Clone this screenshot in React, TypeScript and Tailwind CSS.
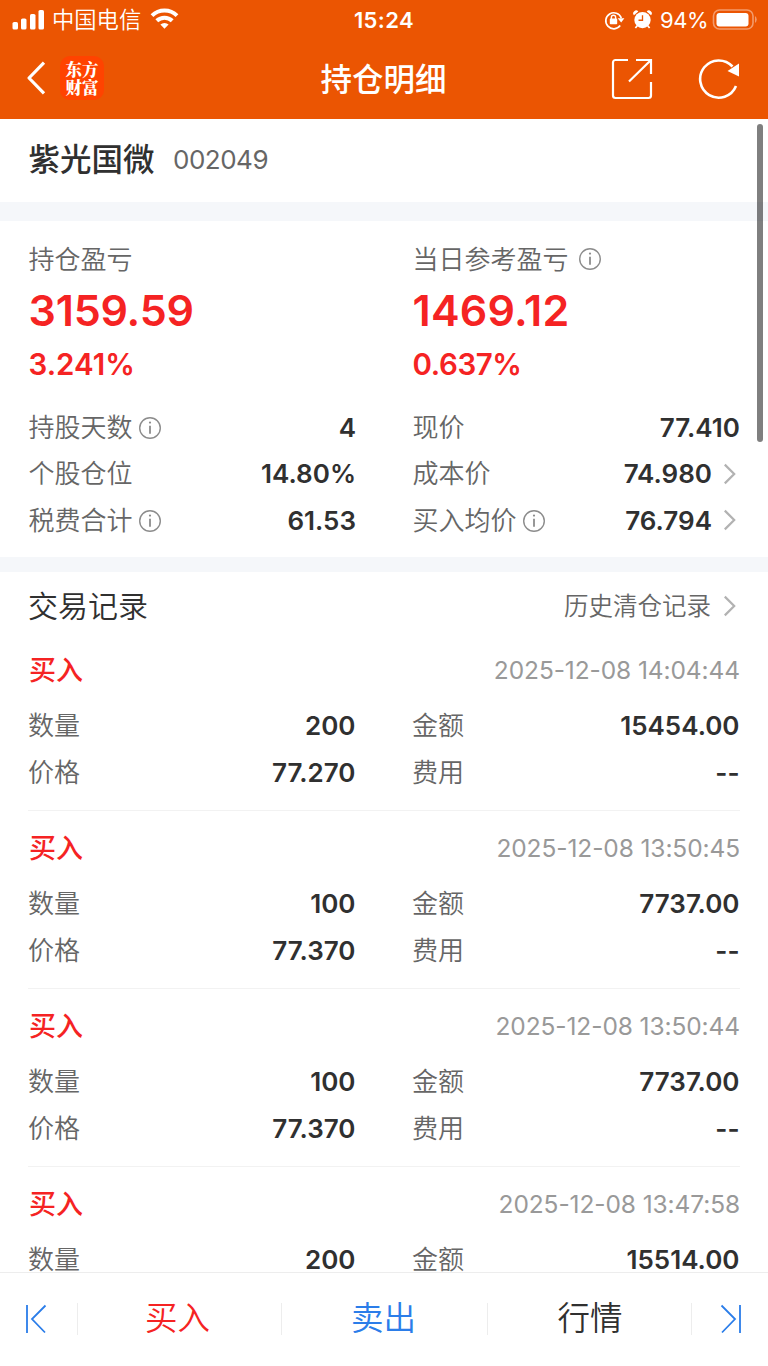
import clsx from "clsx";

const records = [
  { time: "2025-12-08 14:04:44", count: "200", price: "77.270", amount: "15454.00", fee: "--" },
  { time: "2025-12-08 13:50:45", count: "100", price: "77.370", amount: "7737.00", fee: "--" },
  { time: "2025-12-08 13:50:44", count: "100", price: "77.370", amount: "7737.00", fee: "--" },
  { time: "2025-12-08 13:47:58", count: "200", price: "77.370", amount: "15514.00", fee: "--" },
];

function InfoIcon() {
  return (
    <svg width="24" height="24" viewBox="0 0 24 24" fill="none" stroke="#8c8c8c" strokeWidth="1.4">
      <circle cx="12" cy="12" r="10.3" />
      <path d="M12 9.8v8" strokeWidth="1.8" />
      <circle cx="12" cy="6.6" r="1.1" fill="#8c8c8c" stroke="none" />
    </svg>
  );
}

function Arrow() {
  return (
    <svg width="14" height="22" viewBox="0 0 14 22" fill="none" stroke="#b2b2b2" strokeWidth="2.2">
      <path d="M1.8 1.6 11.2 11l-9.4 9.4" />
    </svg>
  );
}

type FieldProps = { label: string; value: string; info?: boolean; arrow?: boolean };

function Field({ label, value, info, arrow }: FieldProps) {
  return (
    <div className="flex h-[46.5px] items-center">
      <span className="text-[26px] font-[350] text-[#666]">{label}</span>
      {info && (
        <span className="ml-[5.5px] mt-0.5">
          <InfoIcon />
        </span>
      )}
      <span className="-mr-[0.5px] ml-auto text-[26px] font-semibold text-[#303030]">{value}</span>
      {arrow && (
        <span className="ml-[11px] mr-[3px]">
          <Arrow />
        </span>
      )}
    </div>
  );
}

function StatusBar() {
  return (
    <div className="flex h-10 items-center pl-3 pr-2.5">
      <div className="flex flex-1 items-center">
        <svg width="33" height="20" viewBox="0 0 33 20" fill="#fff">
          <rect x="0.5" y="12" width="5.5" height="7.5" rx="1.6" />
          <rect x="9" y="8.5" width="5.5" height="11" rx="1.6" />
          <rect x="18" y="4" width="5.5" height="15.5" rx="1.6" />
          <rect x="26.5" y="0" width="5.5" height="19.5" rx="1.6" />
        </svg>
        <span className="ml-[7px] pb-px text-[22.3px] font-[350] leading-[38px]">中国电信</span>
        <svg className="mb-[3px] ml-[9px]" width="29" height="21" viewBox="0 0 29 21" fill="none" stroke="#fff" strokeWidth="4">
          <path d="M2 7.6a18 18 0 0 1 25 0" />
          <path d="M6.8 12.8a11 11 0 0 1 15.4 0" />
          <path d="M14.5 20.8 10.4 16.6a6 6 0 0 1 8.2 0z" fill="#fff" stroke="none" />
        </svg>
      </div>
      <span className="mr-0.5 text-[22px] font-semibold tracking-[0.4px]">15:24</span>
      <div className="flex flex-1 items-center justify-end">
        <svg width="21" height="20" viewBox="0 0 21 20" fill="none" stroke="#fff" strokeWidth="1.7">
          <path d="M16.2 15.6A8 8 0 1 1 17.3 8" />
          <path d="m13.6 8.2h6.8l-3.2 4.4z" fill="#fff" stroke="none" />
          <rect x="5.8" y="8.6" width="7.4" height="5.6" rx="0.8" fill="#fff" stroke="none" />
          <path d="M7.4 9V7.3a2.1 2.1 0 0 1 4.2 0V9" strokeWidth="1.4" />
        </svg>
        <svg className="mb-0.5 ml-2" width="19" height="19" viewBox="0 0 20 20" fill="#fff">
          <circle cx="10" cy="10.6" r="8.6" />
          <path d="M1 5.6a3 3 0 0 1 4.6-4zM19 5.6a3 3 0 0 0-4.6-4z" />
          <path d="m4.5 16.5-2 2.5M15.5 16.5l2 2.5" stroke="#fff" strokeWidth="1.8" />
          <path d="M10 5.6v5.2H5.8" fill="none" stroke="#eb5502" strokeWidth="1.4" />
        </svg>
        <span className="ml-2 text-[22px] tracking-[-0.5px]">94%</span>
        <svg className="mb-px ml-1" width="46" height="22" viewBox="0 0 46 22">
          <rect x="1.5" y="1" width="39.5" height="19" rx="6" fill="none" stroke="#f39b6c" strokeWidth="1.6" />
          <rect x="4.5" y="4" width="32" height="13.5" rx="3" fill="#fff" />
          <path d="M43 7a4.4 4.4 0 0 1 0 7z" fill="#f39b6c" />
        </svg>
      </div>
    </div>
  );
}

function NavBar() {
  return (
    <div className="flex h-[79px] items-center pb-0.5 pl-[26px] pr-[27px]">
      <div className="flex flex-1 items-center pb-0.5">
        <svg width="21" height="34" viewBox="0 0 21 34" fill="none" stroke="#fff" strokeWidth="3.2" strokeLinejoin="round">
          <path d="M18 1.6 3 17l15 15.4" />
        </svg>
        <div className="ml-[13px] flex h-11 w-11 items-center justify-center rounded-[10px] bg-[#ff4300] text-center font-['Noto_Serif_CJK_SC','Noto_Sans_CJK_SC',serif] text-[16.5px] font-black leading-[18px]">
          东方
          <br />
          财富
        </div>
      </div>
      <h1 className="pt-0.5 text-[31.5px] font-medium leading-none">持仓明细</h1>
      <div className="flex flex-1 items-center justify-end">
        <svg width="42" height="42" viewBox="0 0 42 42" fill="none" stroke="#fff" strokeWidth="2.2">
          <path d="M17 2H4.5A2.5 2.5 0 0 0 2 4.5v33A2.5 2.5 0 0 0 4.5 40h33a2.5 2.5 0 0 0 2.5-2.5V24" />
          <path d="M25 2h15v14M39.5 2.5 18 23.5" />
        </svg>
        <svg className="ml-[45px]" width="43" height="42" viewBox="0 0 43 42" fill="none" stroke="#fff" strokeWidth="2.6">
          <path d="M38 28A18.6 18.6 0 1 1 34.5 8.5" />
          <path d="M29.5 13 41 5.5v13z" fill="#fff" stroke="none" />
        </svg>
      </div>
    </div>
  );
}

function Summary() {
  return (
    <section className="grid h-[336px] grid-cols-[327px_327px] content-start gap-x-[57px] pl-[28.5px] pt-[18px]">
      <div>
        <div className="flex h-10 items-center text-[26px] font-[350] text-[#666]">持仓盈亏</div>
        <div className="text-[43px] font-semibold leading-[62px] tracking-[-0.2px] text-[#f52323]">3159.59</div>
        <div className="text-[29.5px] font-semibold leading-[46px] text-[#f52323]">3.241%</div>
      </div>
      <div>
        <div className="flex h-10 items-center text-[26px] font-[350] text-[#666]">
          当日参考盈亏
          <span className="ml-[9px]">
            <InfoIcon />
          </span>
        </div>
        <div className="text-[43px] font-semibold leading-[62px] tracking-[0.2px] text-[#f52323]">1469.12</div>
        <div className="text-[29.5px] font-semibold leading-[46px] tracking-[-0.4px] text-[#f52323]">0.637%</div>
      </div>
      <div className="pt-[17px]">
        <Field label="持股天数" value="4" info />
        <Field label="个股仓位" value="14.80%" />
        <Field label="税费合计" value="61.53" info />
      </div>
      <div className="pt-[17px]">
        <Field label="现价" value="77.410" />
        <Field label="成本价" value="74.980" arrow />
        <Field label="买入均价" value="76.794" info arrow />
      </div>
    </section>
  );
}

function RecordItem({ record }: { record: (typeof records)[number] }) {
  return (
    <div className="h-[178px] border-b border-[#f2f2f2] pt-[14px]">
      <div className="flex h-12 items-center justify-between">
        <span className="pl-px text-[27px] font-medium text-[#f52323]">买入</span>
        <span className="pb-0.5 text-[24.5px] tracking-[-0.1px] text-[#999]">{record.time}</span>
      </div>
      <div className="grid grid-cols-[327px_327px] gap-x-[57px] pt-[7.5px]">
        <Field label="数量" value={record.count} />
        <Field label="金额" value={record.amount} />
        <Field label="价格" value={record.price} />
        <Field label="费用" value={record.fee} />
      </div>
    </div>
  );
}

const tabs = [
  { label: "买入", color: "text-[#f52323]" },
  { label: "卖出", color: "text-[#2b7de9]" },
  { label: "行情", color: "text-[#303030]" },
];

function BottomBar() {
  return (
    <footer className="flex h-[94px] shrink-0 items-center border-t border-[#ededed] bg-white pb-0.5">
      <div className="flex w-[77px] items-center pl-[25px]">
        <svg width="22" height="30" viewBox="0 0 22 30" fill="none" stroke="#2b7de9" strokeWidth="1.8">
          <path d="M2 1v28M20.5 1.5 7 15l13 13.5" />
        </svg>
      </div>
      <div className="grid h-8 flex-1 grid-cols-[204px_206px_1fr] grid-rows-[32px]">
        {tabs.map((tab, i) => (
          <div
            key={tab.label}
            className={clsx(
              "flex items-center justify-center border-l border-[#ededed] text-[32.5px] font-[350] leading-8",
              i === 0 && "pr-1",
              i === 1 && "pr-0.5",
              i === tabs.length - 1 && "border-r pl-px",
              tab.color
            )}
          >
            {tab.label}
          </div>
        ))}
      </div>
      <div className="flex w-[76px] items-center justify-end pr-[26px]">
        <svg width="22" height="30" viewBox="0 0 22 30" fill="none" stroke="#2b7de9" strokeWidth="1.8">
          <path d="M20 1v28M1.5 1.5 15 15 2 28.5" />
        </svg>
      </div>
    </footer>
  );
}

export default function App() {
  return (
    <div className="relative flex h-[1366px] w-[768px] flex-col overflow-hidden bg-white font-['Inter','Noto_Sans_CJK_SC',sans-serif]">
      <header className="h-[119px] shrink-0 bg-[#eb5502] text-white">
        <StatusBar />
        <NavBar />
      </header>
      <main className="min-h-0 flex-1 overflow-hidden">
        <div className="flex h-[83px] items-center pb-0.5 pl-[28.5px]">
          <span className="text-[31.5px] font-medium text-[#303030]">紫光国微</span>
          <span className="ml-[18.5px] text-[26px] tracking-[-0.5px] text-[#666]">002049</span>
        </div>
        <div className="h-[19px] bg-[#f5f7fa]" />
        <Summary />
        <div className="h-[15px] bg-[#f5f7fa]" />
        <section className="pl-[28px] pr-7">
          <div className="flex h-[61px] items-center justify-between pt-[7px]">
            <h2 className="text-[30px] font-[350] text-[#303030]">交易记录</h2>
            <div className="flex items-center text-[24.5px] font-[350] text-[#666]">
              历史清仓记录
              <span className="ml-3 mr-[3px]">
                <Arrow />
              </span>
            </div>
          </div>
          {records.map((record) => (
            <RecordItem key={record.time} record={record} />
          ))}
        </section>
      </main>
      <BottomBar />
      <div className="absolute right-[5px] top-[124px] h-[318px] w-1.5 rounded-full bg-black/50" />
    </div>
  );
}
